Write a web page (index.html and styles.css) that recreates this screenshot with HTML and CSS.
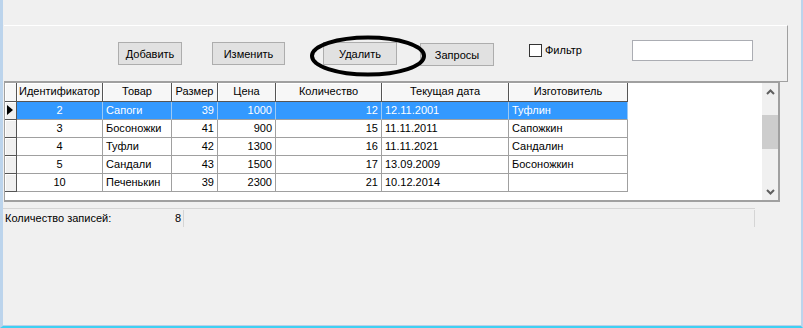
FILE: index.html
```html
<!DOCTYPE html>
<html lang="ru">
  <head>
    <meta charset="UTF-8" />
    <title>Обувь</title>
    <link rel="stylesheet" href="styles.css">
  </head>
  <body>
    <div class="window">
      <div class="toolbar">
        <button class="btn btn-add">Добавить</button>
        <button class="btn btn-edit">Изменить</button>
        <button class="btn btn-del">Удалить</button>
        <button class="btn btn-query">Запросы</button>
        <label class="filter"><span class="check"></span>Фильтр</label>
        <input class="filter-input" />
        <svg class="mark" width="124" height="46" viewBox="0 0 124 46">
          <ellipse cx="61" cy="23" rx="56" ry="18.5" fill="none" stroke="#000" stroke-width="4" />
        </svg>
      </div>

      <div class="grid">
        <div class="table">
          <div class="hd"></div>
          <div class="hd">Идентификатор</div>
          <div class="hd">Товар</div>
          <div class="hd">Размер</div>
          <div class="hd">Цена</div>
          <div class="hd">Количество</div>
          <div class="hd">Текущая дата</div>
          <div class="hd">Изготовитель</div>

          <div class="rh current"></div>
          <div class="c sel center">2</div>
          <div class="c sel">Сапоги</div>
          <div class="c sel right">39</div>
          <div class="c sel right">1000</div>
          <div class="c sel right">12</div>
          <div class="c sel">12.11.2001</div>
          <div class="c sel">Туфлин</div>

          <div class="rh"></div>
          <div class="c center">3</div>
          <div class="c">Босоножки</div>
          <div class="c right">41</div>
          <div class="c right">900</div>
          <div class="c right">15</div>
          <div class="c">11.11.2011</div>
          <div class="c">Сапожкин</div>

          <div class="rh"></div>
          <div class="c center">4</div>
          <div class="c">Туфли</div>
          <div class="c right">42</div>
          <div class="c right">1300</div>
          <div class="c right">16</div>
          <div class="c">11.11.2021</div>
          <div class="c">Сандалин</div>

          <div class="rh"></div>
          <div class="c center">5</div>
          <div class="c">Сандали</div>
          <div class="c right">43</div>
          <div class="c right">1500</div>
          <div class="c right">17</div>
          <div class="c">13.09.2009</div>
          <div class="c">Босоножкин</div>

          <div class="rh"></div>
          <div class="c center">10</div>
          <div class="c">Печенькин</div>
          <div class="c right">39</div>
          <div class="c right">2300</div>
          <div class="c right">21</div>
          <div class="c">10.12.2014</div>
          <div class="c"></div>
        </div>
        <div class="scroll">
          <div class="arrow">
            <svg width="9" height="6" viewBox="0 0 9 6"><polyline points="1,5 4.5,1.5 8,5" fill="none" stroke="#606060" stroke-width="2" /></svg>
          </div>
          <div class="thumb"></div>
          <div class="track"></div>
          <div class="arrow">
            <svg width="9" height="6" viewBox="0 0 9 6"><polyline points="1,1 4.5,4.5 8,1" fill="none" stroke="#606060" stroke-width="2" /></svg>
          </div>
        </div>
      </div>

      <div class="status">
        <div class="count"><span>Количество записей:</span><span>8</span></div>
        <div class="status-rest"></div>
      </div>
    </div>
  </body>
</html>
```

FILE: styles.css
```css
body {
  margin: 0;
  font-family: "Liberation Sans", Arial, sans-serif;
  font-size: 11px;
  color: #000;
}
.window {
  box-sizing: border-box;
  width: 803px;
  height: 328px;
  padding-top: 25px;
  background-color: #f0f0f0;
  border-left: 3px solid #bcd4ec;
  border-right: 2px solid #bcd4ec;
  border-bottom: 2px solid #3fd0f2;
  box-shadow: inset 0 -1px 0 #b9d1ea;
}
.toolbar {
  position: relative;
  box-sizing: border-box;
  display: flex;
  align-items: flex-start;
  width: 784px;
  height: 57px;
  margin-left: 1px;
  border-top: 1px solid #ffffff;
  border-right: 1px solid #a0a0a0;
  border-bottom: 1px solid #a0a0a0;
}
.btn {
  box-sizing: border-box;
  height: 23px;
  padding: 0;
  margin-top: 16px;
  background-color: #e1e1e1;
  border: 1px solid #adadad;
  font-family: inherit;
  font-size: 11px;
  color: #000;
}
.btn-add {
  width: 64px;
  margin-left: 114px;
}
.btn-edit {
  width: 73px;
  margin-left: 30px;
}
.btn-del {
  width: 74px;
  margin-left: 38px;
}
.btn-query {
  width: 74px;
  margin-left: 23px;
  margin-top: 17px;
}
.filter {
  display: flex;
  align-items: center;
  width: 103px;
  margin-left: 35px;
  margin-top: 18px;
  line-height: 13px;
}
.check {
  box-sizing: border-box;
  width: 13px;
  height: 13px;
  margin-right: 3px;
  background-color: #fff;
  border: 1px solid #333;
}
.filter-input {
  box-sizing: border-box;
  width: 121px;
  height: 21px;
  margin-top: 14px;
  padding: 0;
  background-color: #fff;
  border: 1px solid #abadb3;
}
.mark {
  position: absolute;
  left: 303px;
  top: 7px;
}
.grid {
  box-sizing: border-box;
  display: flex;
  width: 776px;
  height: 120px;
  margin-left: 1px;
  background-color: #fff;
  border: 1px solid #a0a0a0;
  border-right-width: 2px;
  border-bottom-width: 2px;
}
.table {
  flex: 1;
  display: grid;
  grid-template-columns: 12px 86px 69px 46px 58px 106px 127px 119px;
  grid-template-rows: 19px repeat(5, 18px);
  align-content: start;
}
.hd,
.c,
.rh {
  box-sizing: border-box;
  overflow: hidden;
  white-space: nowrap;
  padding: 0 3px;
  line-height: 17px;
}
.hd {
  padding: 0 1px;
  text-align: center;
  background-color: #f7f7f7;
  border-right: 1px solid #555;
  border-bottom: 1px solid #555;
  box-shadow: inset 1px 1px 0 #fff;
}
.rh {
  position: relative;
  background-color: #f0f0f0;
  border-right: 1px solid #555;
  border-bottom: 1px solid #555;
  box-shadow: inset 1px 1px 0 #fff;
}
.current::after {
  content: "";
  position: absolute;
  left: 2px;
  top: 3px;
  border-left: 6px solid #000;
  border-top: 5px solid transparent;
  border-bottom: 5px solid transparent;
}
.c {
  border-right: 1px solid #a0a0a0;
  border-bottom: 1px solid #a0a0a0;
}
.sel {
  background-color: #3399ff;
  color: #fff;
  border-right-color: #9cc9f5;
}
.center {
  text-align: center;
}
.right {
  text-align: right;
}
.scroll {
  display: flex;
  flex-direction: column;
  width: 16px;
  background-color: #f0f0f0;
}
.arrow {
  display: flex;
  align-items: center;
  justify-content: center;
  height: 17px;
}
.thumb {
  height: 34px;
  margin-top: 15px;
  background-color: #cdcdcd;
}
.track {
  flex: 1;
}
.status {
  box-sizing: border-box;
  display: flex;
  width: 752px;
  height: 19px;
  margin-top: 6px;
  border-top: 1px solid #d5d5d5;
  padding-top: 1px;
}
.count {
  display: flex;
  justify-content: space-between;
  box-sizing: border-box;
  width: 181px;
  padding: 0 2px;
  line-height: 17px;
  border-right: 1px solid #d5d5d5;
}
.status-rest {
  flex: 1;
  border-right: 1px solid #d5d5d5;
}
```
